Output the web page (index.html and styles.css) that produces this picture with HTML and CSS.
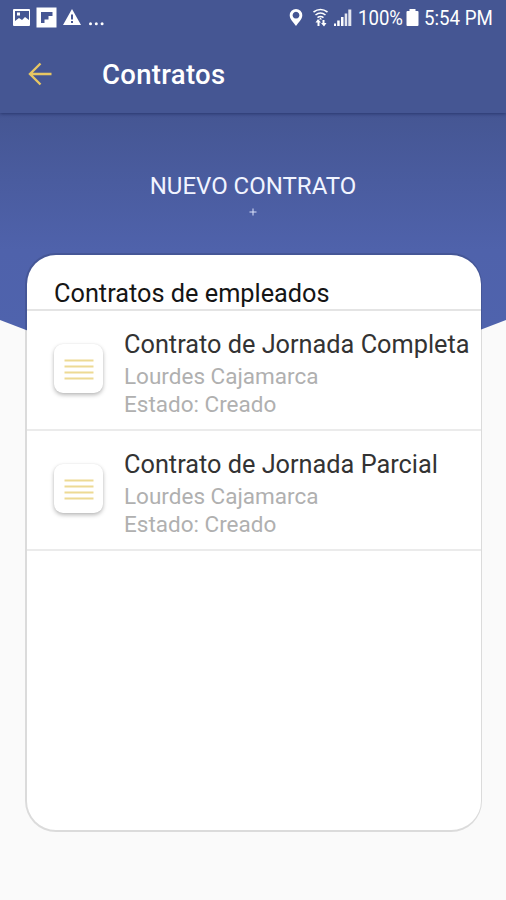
FILE: index.html
```html
<!DOCTYPE html>
<html lang="es">
<head>
<meta charset="utf-8">
<title>Contratos</title>
<link rel="stylesheet" href="styles.css">
</head>
<body>
<div class="screen">
  <header class="top">
    <div class="status">
      <svg class="status-left" width="110" height="36" viewBox="0 0 110 36" fill="#fff">
        <path fill-rule="evenodd" d="M14 9h15q1 0 1 1v15q0 1-1 1H14q-1 0-1-1V10q0-1 1-1zM15 11v10l4-3 3 2 3-3 4 3v-9zM17 12.500h3v3h-3z"/>
        <path fill-rule="evenodd" d="M36.500 7.500h20v20h-20zM41 12v11h3.500v-3.500h4V16h4v-4z"/>
        <path fill-rule="evenodd" d="M72 9l9 16H63zM71 14.500v5h2v-5zM71 21v2h2v-2z"/>
        <circle cx="90.500" cy="23.700" r="1.500"/><circle cx="96.300" cy="23.700" r="1.500"/><circle cx="102.100" cy="23.700" r="1.500"/>
      </svg>
      <svg class="status-right" width="68" height="36" viewBox="0 0 68 36" fill="#fff">
        <path fill-rule="evenodd" d="M10 9a6.300 6.300 0 0 1 6.300 6.300C16.300 19 13 22 10 26 7 22 3.700 19 3.700 15.300A6.300 6.300 0 0 1 10 9zM10 11.800a3.400 3.400 0 1 0 .01 0z"/>
        <g fill="none" stroke="#fff" stroke-width="1.600"><path d="M27.500 12q7-5 14 0M29.500 15q5-4 10 0M31.500 17.700q3-2.400 6 0"/></g>
        <path d="M34.500 17.500l1.500 2h-3zM32 19l3 3.500h-1.500V26h-2v-3.500h-2zM38 26.500L35 23h1.500v-3h2v3h2z"/>
        <path d="M48 23.500h2V26h-2zM51.200 20.500h2.500V26h-2.500zM55 17h2.500v9H55z"/><path d="M58.700 13.500h2.500V26h-2.500zM62.300 9.500h3V26h-3z" opacity=".85"/>
      </svg>
      <span class="percent">100%</span>
      <svg class="battery" width="13" height="20" viewBox="0 0 13 20" fill="#fff"><path d="M3.500 1h6v2H11.500q1 0 1 1v13q0 1-1 1H1.500q-1 0-1-1V4q0-1 1-1h2z"/></svg>
      <span class="clock">5:54 PM</span>
    </div>
    <div class="toolbar">
      <svg class="back" width="26" height="26" viewBox="0 0 26 26" fill="none" stroke="#e7c663" stroke-width="2.400"><path d="M25.500 13H4M14.500 2.500L4 13l10.500 10.500"/></svg>
      <h1 class="title">Contratos</h1>
    </div>
  </header>
  <section class="hero">
    <div class="new">NUEVO CONTRATO</div>
    <svg class="plus" width="8" height="8" viewBox="0 0 8 8" stroke="#dce3fa" stroke-width="1"><path d="M4 .5v7M.5 4h7"/></svg>
  </section>
  <main class="card">
    <h2 class="heading">Contratos de empleados</h2>
    <article class="row">
      <div class="tile"><svg width="30" height="22" viewBox="0 0 30 22" stroke="#edda94" stroke-width="2"><path d="M.5 2.500h29M.5 8.500h29M.5 14.500h29M.5 20.500h29"/></svg></div>
      <div class="info">
        <div class="name">Contrato de Jornada Completa</div>
        <div class="meta">Lourdes Cajamarca</div>
        <div class="meta">Estado: Creado</div>
      </div>
    </article>
    <article class="row">
      <div class="tile"><svg width="30" height="22" viewBox="0 0 30 22" stroke="#edda94" stroke-width="2"><path d="M.5 2.500h29M.5 8.500h29M.5 14.500h29M.5 20.500h29"/></svg></div>
      <div class="info">
        <div class="name">Contrato de Jornada Parcial</div>
        <div class="meta">Lourdes Cajamarca</div>
        <div class="meta">Estado: Creado</div>
      </div>
    </article>
  </main>
</div>
</body>
</html>
```
FILE: styles.css
```css
* { box-sizing: border-box; }
body { margin: 0; font-family: Roboto, "Liberation Sans", sans-serif; background: #fafafa; }
.screen {
  position: relative;
  height: 900px;
  overflow: hidden;
  z-index: 0;
}
.screen::before {
  content: "";
  position: absolute;
  z-index: -1;
  inset: 0 0 auto;
  height: 417px;
  background: linear-gradient(#455693 113px, #4f62ab 250px, #4f63ad 330px);
  clip-path: polygon(0 0, 100% 0, 100% 320px, 50% 417px, 0 320px);
}
.top { height: 113px; background: #455693; box-shadow: 0 1px 3px rgba(20, 30, 80, .55); }
.status { display: flex; height: 36px; color: #fff; font-size: 20px; line-height: 37px; }
.status svg { flex: none; }
.status-right { margin-left: 176px; }
.percent, .clock { flex: none; white-space: nowrap; transform-origin: left; }
.percent { width: 52px; margin-left: 4px; transform: scaleX(.93); }
.battery { margin: 8px 5px 0 -4px; }
.clock { transform: scaleX(.935); }
.toolbar { display: flex; align-items: center; height: 77px; padding: 0 0 1px 26px; }
.title { margin: 2px 0 0 50px; color: #fff; font-size: 27.5px; font-weight: 500; line-height: 36px; letter-spacing: .3px; }
.hero { display: flex; flex-direction: column; align-items: center; height: 142px; padding-top: 58px; }
.new { color: #f1f4ff; font-size: 24px; line-height: 30px; }
.plus { margin-top: 7px; }
.card {
  width: 457px;
  height: 579px;
  margin: -2px 0 0 25px;
  border: 2px solid rgba(0, 0, 0, .12);
  border-right-width: 1px;
  border-radius: 31px;
  background: #fff;
  background-clip: padding-box;
  overflow: hidden;
}
.heading { height: 56px; margin: 0; padding: 20px 0 0 27px; border-bottom: 2px solid #e4e4e4; color: #151515; font-size: 25.300px; font-weight: 400; line-height: 37px; white-space: nowrap; }
.row { display: flex; height: 120px; padding-left: 27px; border-bottom: 2px solid #ebebeb; }
.tile { display: grid; place-items: center; flex: none; width: 49px; height: 49px; margin: 33px 21px 0 0; border-radius: 9px; background: #fff; box-shadow: 0 2px 4px rgba(0, 0, 0, .28), 0 0 2px rgba(0, 0, 0, .06); }
.info { padding-top: 16px; white-space: nowrap; }
.name { color: #333; font-size: 25.300px; line-height: 36px; }
.name + .meta { margin-top: -1px; }
.meta { color: #b0b0b0; font-size: 22.500px; line-height: 28px; }
```
